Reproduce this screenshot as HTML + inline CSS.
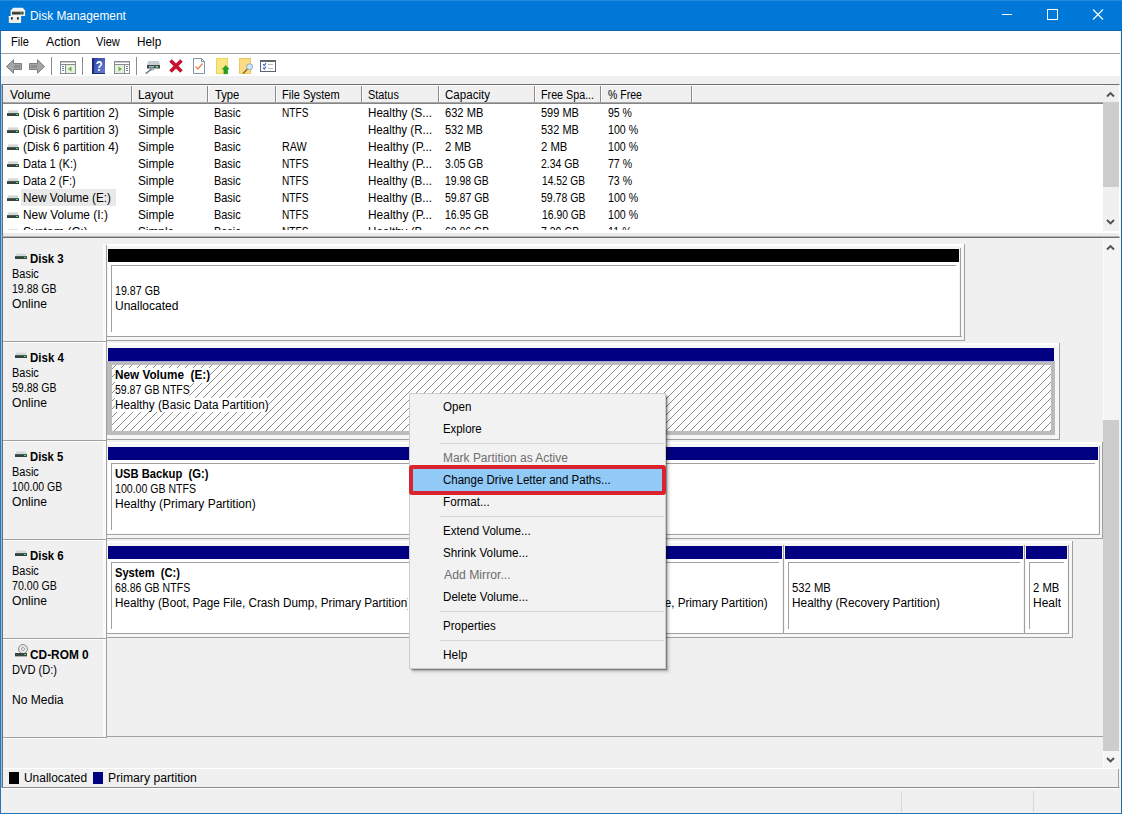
<!DOCTYPE html>
<html lang="en"><head><meta charset="utf-8"><title>Disk Management</title>
<style>
*{box-sizing:border-box;margin:0;padding:0}
html,body{width:1122px;height:814px;overflow:hidden;background:#f0f0f0}
body{font-family:"Liberation Sans", "DejaVu Sans", sans-serif;font-size:12px;color:#000;position:relative;line-height:14px}
.a{position:absolute}
.t{position:absolute;white-space:pre;line-height:14px;height:14px;transform-origin:0 0}
.b{font-weight:bold}
.g{color:#6d6d6d}
.w{background:#fff;height:15px}
svg{position:absolute;overflow:visible}
</style></head>
<body>
<div class="a" style="left:0px;top:0px;width:1122px;height:814px;background:#f0f0f0;"></div>
<div class="a" style="left:0px;top:0px;width:1122px;height:30px;background:#0078d7;"></div>
<div class="a" style="left:0px;top:30px;width:1122px;height:1px;background:#0b64b2;"></div>
<div class="a" style="left:0px;top:0px;width:1122px;height:1px;background:#2488df;"></div>
<div class="t " style="left:30.00px;top:9px;transform:scaleX(0.991);color:#fff;">Disk Management</div>
<svg style="left:1002px;top:9px" width="102" height="12" viewBox="0 0 102 12"><g stroke="#fff" stroke-width="1" fill="none" shape-rendering="crispEdges"><line x1="0" y1="5.5" x2="10" y2="5.5"/><rect x="45.5" y="0.5" width="10" height="10"/></g><g stroke="#fff" stroke-width="1.1" fill="none"><line x1="91" y1="0.5" x2="101" y2="10.5"/><line x1="101" y1="0.5" x2="91" y2="10.5"/></g></svg>
<svg style="left:8px;top:7px" width="18" height="17" viewBox="0 0 18 17"><path d="M5.2 0.8H14.8L17.1 3.6V9H2.7V3.6Z" fill="#f3f3f3"/><rect x="4" y="4.8" width="11.5" height="2.7" fill="#2c3a36"/><rect x="4" y="4.8" width="11.5" height="0.8" fill="#6a5a40"/><rect x="12.4" y="5.7" width="1.8" height="1" fill="#58d868"/><path d="M0.8 9H13.1V15.2Q13.1 16 12.3 16H1.6Q0.8 16 0.8 15.2Z" fill="#ededed"/><rect x="0.8" y="9" width="12.3" height="1" fill="#fafafa"/><rect x="3" y="10.2" width="1.7" height="2.4" fill="#1e1e1e"/><rect x="9" y="10.2" width="1.7" height="2.4" fill="#1e1e1e"/></svg>
<div class="a" style="left:1px;top:31px;width:1120px;height:22px;background:#fff;"></div>
<div class="t " style="left:11.00px;top:35px;transform:scaleX(0.923);">File</div>
<div class="t " style="left:46.00px;top:35px;transform:scaleX(1.030);">Action</div>
<div class="t " style="left:96.00px;top:35px;transform:scaleX(0.924);">View</div>
<div class="t " style="left:137.00px;top:35px;transform:scaleX(0.982);">Help</div>
<div class="a" style="left:1px;top:53px;width:1120px;height:1px;background:#a0a0a0;"></div>
<div class="a" style="left:1px;top:54px;width:1120px;height:22px;background:#fff;"></div>
<svg style="left:6px;top:59px" width="16" height="15" viewBox="0 0 16 15"><path d="M0.5 7.5L7.5 0.8V4.5H15.5V10.5H7.5V14.2Z" fill="#a6a6a6" stroke="#7d7d7d" stroke-width="1" stroke-linejoin="round"/><rect x="8" y="6" width="6" height="3" fill="#8e8e8e"/></svg>
<svg style="left:29px;top:59px" width="16" height="15" viewBox="0 0 16 15"><path d="M15.5 7.5L8.5 0.8V4.5H0.5V10.5H8.5V14.2Z" fill="#a6a6a6" stroke="#7d7d7d" stroke-width="1" stroke-linejoin="round"/><rect x="2" y="6" width="6" height="3" fill="#8e8e8e"/></svg>
<div class="a" style="left:51px;top:57px;width:1px;height:18px;background:#8c8c8c;"></div>
<div class="a" style="left:82px;top:57px;width:1px;height:18px;background:#8c8c8c;"></div>
<div class="a" style="left:136px;top:57px;width:1px;height:18px;background:#8c8c8c;"></div>
<svg style="left:60px;top:61px" width="16" height="13" viewBox="0 0 16 13"><rect x="0.5" y="0.5" width="15" height="12" fill="#fff" stroke="#8a8c94"/><rect x="1" y="1" width="14" height="1" fill="#c9cbd0"/><rect x="1" y="3" width="14" height="1" fill="#8a8c94"/><rect x="6" y="4" width="9" height="8" fill="#e3f2da"/><rect x="5" y="4" width="1" height="8" fill="#8a8c94"/><rect x="2" y="5" width="2" height="1" fill="#6a7ea8"/><rect x="2" y="7" width="2" height="1" fill="#6a7ea8"/><rect x="2" y="9" width="2" height="1" fill="#6a7ea8"/><path d="M8 8L11.5 5.5V10.5Z" fill="#6fae52"/></svg>
<svg style="left:92px;top:58px" width="13" height="16" viewBox="0 0 13 16"><defs><linearGradient id="hg" x1="0" y1="0" x2="1" y2="1"><stop offset="0" stop-color="#2b3da0"/><stop offset="1" stop-color="#6683d6"/></linearGradient></defs><rect width="13" height="16" fill="url(#hg)"/><rect width="2" height="16" fill="#1d2a78"/><rect y="15" width="13" height="1" fill="#1d2a78"/><text transform="translate(7.2 13.2) scale(.8 1)" font-family="Liberation Sans, sans-serif" font-weight="bold" font-size="14" fill="#fff" text-anchor="middle">?</text></svg>
<svg style="left:114px;top:61px" width="16" height="13" viewBox="0 0 16 13"><rect x="0.5" y="0.5" width="15" height="12" fill="#fff" stroke="#8a8c94"/><rect x="1" y="1" width="14" height="1" fill="#c9cbd0"/><rect x="1" y="3" width="14" height="1" fill="#8a8c94"/><rect x="1" y="4" width="9" height="8" fill="#e3f2da"/><rect x="10" y="4" width="1" height="8" fill="#8a8c94"/><rect x="12" y="5" width="2" height="1" fill="#6a7ea8"/><rect x="12" y="7" width="2" height="1" fill="#6a7ea8"/><rect x="12" y="9" width="2" height="1" fill="#6a7ea8"/><path d="M8 8L4.5 5.5V10.5Z" fill="#6fae52"/></svg>
<svg style="left:145px;top:61px" width="15" height="13" viewBox="0 0 15 13"><path d="M3 0H14L15 4H2Z" fill="#c8cdd2"/><rect x="2" y="4" width="13" height="3.5" fill="#3e4a4a"/><rect x="4" y="5" width="5" height="1.5" fill="#9fb0c4"/><rect x="10.5" y="5" width="2.5" height="1.5" fill="#7be07b"/><path d="M4 7.5H11L8 9.5H5Z" fill="#a9b4c0"/><path d="M6.5 8L0.8 12.6" stroke="#6e7a88" stroke-width="1.5"/></svg>
<svg style="left:169px;top:59px" width="14" height="14" viewBox="0 0 14 14"><path d="M1.5 1.5L12.5 12.5M12.5 1.5L1.5 12.5" stroke="#c8102e" stroke-width="3.6"/></svg>
<svg style="left:193px;top:58px" width="12" height="16" viewBox="0 0 12 16"><path d="M0.5 0.5H8.5L11.5 3.5V15.5H0.5Z" fill="#fff" stroke="#8393a6"/><path d="M8.5 0.5V3.5H11.5" fill="none" stroke="#8393a6"/><path d="M2.5 8.5L5 11L9.5 5.5" fill="none" stroke="#e58a5a" stroke-width="1.5"/></svg>
<svg style="left:216px;top:58px" width="13" height="16" viewBox="0 0 13 16"><rect x="0.5" y="0.5" width="11" height="15" fill="#fbe77f" stroke="#ecd060"/><path d="M9.7 7.4L13.1 11.2H11.5V15.8H7.9V11.2H6.3Z" fill="#22a022" stroke="#1c8a1c" stroke-width=".5"/></svg>
<svg style="left:239px;top:58px" width="14" height="16" viewBox="0 0 14 16"><rect x="0.5" y="0.5" width="11" height="15" fill="#fbdc85" stroke="#ecc868"/><path d="M8.5 11L4 15.5" stroke="#8a6a3a" stroke-width="1.6"/><circle cx="10.6" cy="8.8" r="3" fill="#cfe8f8" stroke="#9aa8b4" stroke-width="1"/></svg>
<svg style="left:260px;top:60px" width="16" height="12" viewBox="0 0 16 12"><rect x="0.5" y="0.5" width="15" height="11" fill="#fff" stroke="#5c6672"/><rect x="0" y="0" width="16" height="2" fill="#5c6672"/><path d="M3 4L4.2 5.5L6 3.2M3 7.5L4.2 9L6 6.7" fill="none" stroke="#3a5fc0" stroke-width="1.1"/><rect x="8" y="4" width="5" height="1" fill="#b8bcc2"/><rect x="8" y="8" width="5" height="1" fill="#b8bcc2"/></svg>
<div class="a" style="left:2px;top:84px;width:1118px;height:153px;background:#fff;border:1px solid #6e6e6e;border-bottom-color:#b4b4b4;border-right-color:#fff;"></div>
<div class="a" style="left:3px;top:233px;width:1116px;height:3px;background:#ececec;"></div>
<div class="a" style="left:3px;top:85px;width:1100px;height:19px;background:#f0f0f0;border-top:1px solid #fff;border-bottom:1px solid #858585;"></div>
<div class="a" style="left:3px;top:102px;width:1100px;height:1px;background:#a8a8a8;"></div>
<div class="a" style="left:131px;top:86px;width:1px;height:16px;background:#8a8a8a;"></div>
<div class="a" style="left:132px;top:86px;width:1px;height:16px;background:#fff;"></div>
<div class="a" style="left:207px;top:86px;width:1px;height:16px;background:#8a8a8a;"></div>
<div class="a" style="left:208px;top:86px;width:1px;height:16px;background:#fff;"></div>
<div class="a" style="left:275px;top:86px;width:1px;height:16px;background:#8a8a8a;"></div>
<div class="a" style="left:276px;top:86px;width:1px;height:16px;background:#fff;"></div>
<div class="a" style="left:361px;top:86px;width:1px;height:16px;background:#8a8a8a;"></div>
<div class="a" style="left:362px;top:86px;width:1px;height:16px;background:#fff;"></div>
<div class="a" style="left:438px;top:86px;width:1px;height:16px;background:#8a8a8a;"></div>
<div class="a" style="left:439px;top:86px;width:1px;height:16px;background:#fff;"></div>
<div class="a" style="left:534px;top:86px;width:1px;height:16px;background:#8a8a8a;"></div>
<div class="a" style="left:535px;top:86px;width:1px;height:16px;background:#fff;"></div>
<div class="a" style="left:600px;top:86px;width:1px;height:16px;background:#8a8a8a;"></div>
<div class="a" style="left:601px;top:86px;width:1px;height:16px;background:#fff;"></div>
<div class="a" style="left:691px;top:86px;width:1px;height:16px;background:#8a8a8a;"></div>
<div class="a" style="left:692px;top:86px;width:1px;height:16px;background:#fff;"></div>
<div class="t " style="left:10.00px;top:88px;transform:scaleX(1.014);">Volume</div>
<div class="t " style="left:138.00px;top:88px;transform:scaleX(0.980);">Layout</div>
<div class="t " style="left:215.00px;top:88px;transform:scaleX(0.935);">Type</div>
<div class="t " style="left:282.00px;top:88px;transform:scaleX(0.921);">File System</div>
<div class="t " style="left:368.00px;top:88px;transform:scaleX(0.906);">Status</div>
<div class="t " style="left:445.00px;top:88px;transform:scaleX(0.963);">Capacity</div>
<div class="t " style="left:541.00px;top:88px;transform:scaleX(0.894);">Free Spa...</div>
<div class="t " style="left:608.00px;top:88px;transform:scaleX(0.877);">% Free</div>
<div class="a" style="left:3px;top:103px;width:1099px;height:127px;overflow:hidden">
<svg style="left:4px;top:7px" width="12" height="6" viewBox="0 0 12 6"><rect x="1" y="0" width="10" height="3" fill="#d3d7d7"/><rect x="1" y="0" width="10" height="1" fill="#e4e6e6"/><rect x="0" y="3" width="12" height="3" fill="#33433e"/><rect x="0" y="3" width="12" height="1" fill="#4a5a55"/><rect x="9" y="4" width="2" height="1" fill="#4ee06a"/></svg>
<div class="t " style="left:20.00px;top:3px;transform:scaleX(0.982);">(Disk 6 partition 2)</div>
<div class="t " style="left:135.00px;top:3px;transform:scaleX(0.983);">Simple</div>
<div class="t " style="left:211.00px;top:3px;transform:scaleX(0.911);">Basic</div>
<div class="t " style="left:279.00px;top:3px;transform:scaleX(0.842);">NTFS</div>
<div class="t " style="left:365.00px;top:3px;transform:scaleX(0.969);">Healthy (S...</div>
<div class="t " style="left:442.00px;top:3px;transform:scaleX(0.927);">632 MB</div>
<div class="t " style="left:538.00px;top:3px;transform:scaleX(0.916);">599 MB</div>
<div class="t " style="left:605.00px;top:3px;transform:scaleX(0.875);">95 %</div>
<svg style="left:4px;top:24px" width="12" height="6" viewBox="0 0 12 6"><rect x="1" y="0" width="10" height="3" fill="#d3d7d7"/><rect x="1" y="0" width="10" height="1" fill="#e4e6e6"/><rect x="0" y="3" width="12" height="3" fill="#33433e"/><rect x="0" y="3" width="12" height="1" fill="#4a5a55"/><rect x="9" y="4" width="2" height="1" fill="#4ee06a"/></svg>
<div class="t " style="left:20.00px;top:20px;transform:scaleX(0.982);">(Disk 6 partition 3)</div>
<div class="t " style="left:135.00px;top:20px;transform:scaleX(0.983);">Simple</div>
<div class="t " style="left:211.00px;top:20px;transform:scaleX(0.911);">Basic</div>
<div class="t " style="left:365.00px;top:20px;transform:scaleX(0.961);">Healthy (R...</div>
<div class="t " style="left:442.00px;top:20px;transform:scaleX(0.916);">532 MB</div>
<div class="t " style="left:538.00px;top:20px;transform:scaleX(0.916);">532 MB</div>
<div class="t " style="left:605.00px;top:20px;transform:scaleX(0.884);">100 %</div>
<svg style="left:4px;top:41px" width="12" height="6" viewBox="0 0 12 6"><rect x="1" y="0" width="10" height="3" fill="#d3d7d7"/><rect x="1" y="0" width="10" height="1" fill="#e4e6e6"/><rect x="0" y="3" width="12" height="3" fill="#33433e"/><rect x="0" y="3" width="12" height="1" fill="#4a5a55"/><rect x="9" y="4" width="2" height="1" fill="#4ee06a"/></svg>
<div class="t " style="left:20.00px;top:37px;transform:scaleX(0.982);">(Disk 6 partition 4)</div>
<div class="t " style="left:135.00px;top:37px;transform:scaleX(0.983);">Simple</div>
<div class="t " style="left:211.00px;top:37px;transform:scaleX(0.911);">Basic</div>
<div class="t " style="left:279.00px;top:37px;transform:scaleX(0.896);">RAW</div>
<div class="t " style="left:365.00px;top:37px;transform:scaleX(0.995);">Healthy (P...</div>
<div class="t " style="left:442.00px;top:37px;transform:scaleX(0.943);">2 MB</div>
<div class="t " style="left:538.00px;top:37px;transform:scaleX(0.943);">2 MB</div>
<div class="t " style="left:605.00px;top:37px;transform:scaleX(0.884);">100 %</div>
<svg style="left:4px;top:58px" width="12" height="6" viewBox="0 0 12 6"><rect x="1" y="0" width="10" height="3" fill="#d3d7d7"/><rect x="1" y="0" width="10" height="1" fill="#e4e6e6"/><rect x="0" y="3" width="12" height="3" fill="#33433e"/><rect x="0" y="3" width="12" height="1" fill="#4a5a55"/><rect x="9" y="4" width="2" height="1" fill="#4ee06a"/></svg>
<div class="t " style="left:20.00px;top:54px;transform:scaleX(0.925);">Data 1 (K:)</div>
<div class="t " style="left:135.00px;top:54px;transform:scaleX(0.983);">Simple</div>
<div class="t " style="left:211.00px;top:54px;transform:scaleX(0.911);">Basic</div>
<div class="t " style="left:279.00px;top:54px;transform:scaleX(0.842);">NTFS</div>
<div class="t " style="left:365.00px;top:54px;transform:scaleX(0.995);">Healthy (P...</div>
<div class="t " style="left:442.00px;top:54px;transform:scaleX(0.865);">3.05 GB</div>
<div class="t " style="left:538.00px;top:54px;transform:scaleX(0.870);">2.34 GB</div>
<div class="t " style="left:605.00px;top:54px;transform:scaleX(0.880);">77 %</div>
<svg style="left:4px;top:75px" width="12" height="6" viewBox="0 0 12 6"><rect x="1" y="0" width="10" height="3" fill="#d3d7d7"/><rect x="1" y="0" width="10" height="1" fill="#e4e6e6"/><rect x="0" y="3" width="12" height="3" fill="#33433e"/><rect x="0" y="3" width="12" height="1" fill="#4a5a55"/><rect x="9" y="4" width="2" height="1" fill="#4ee06a"/></svg>
<div class="t " style="left:20.00px;top:71px;transform:scaleX(0.920);">Data 2 (F:)</div>
<div class="t " style="left:135.00px;top:71px;transform:scaleX(0.983);">Simple</div>
<div class="t " style="left:211.00px;top:71px;transform:scaleX(0.911);">Basic</div>
<div class="t " style="left:279.00px;top:71px;transform:scaleX(0.842);">NTFS</div>
<div class="t " style="left:365.00px;top:71px;transform:scaleX(0.969);">Healthy (B...</div>
<div class="t " style="left:442.00px;top:71px;transform:scaleX(0.862);">19.98 GB</div>
<div class="t " style="left:539.00px;top:71px;transform:scaleX(0.847);">14.52 GB</div>
<div class="t " style="left:605.00px;top:71px;transform:scaleX(0.880);">73 %</div>
<div class="a" style="left:18px;top:86px;width:95px;height:17px;background:#e9e9e9"></div>
<svg style="left:4px;top:92px" width="12" height="6" viewBox="0 0 12 6"><rect x="1" y="0" width="10" height="3" fill="#d3d7d7"/><rect x="1" y="0" width="10" height="1" fill="#e4e6e6"/><rect x="0" y="3" width="12" height="3" fill="#33433e"/><rect x="0" y="3" width="12" height="1" fill="#4a5a55"/><rect x="9" y="4" width="2" height="1" fill="#4ee06a"/></svg>
<div class="t " style="left:20.00px;top:88px;transform:scaleX(0.977);">New Volume (E:)</div>
<div class="t " style="left:135.00px;top:88px;transform:scaleX(0.983);">Simple</div>
<div class="t " style="left:211.00px;top:88px;transform:scaleX(0.911);">Basic</div>
<div class="t " style="left:279.00px;top:88px;transform:scaleX(0.842);">NTFS</div>
<div class="t " style="left:365.00px;top:88px;transform:scaleX(0.969);">Healthy (B...</div>
<div class="t " style="left:442.00px;top:88px;transform:scaleX(0.874);">59.87 GB</div>
<div class="t " style="left:538.00px;top:88px;transform:scaleX(0.874);">59.78 GB</div>
<div class="t " style="left:605.00px;top:88px;transform:scaleX(0.884);">100 %</div>
<svg style="left:4px;top:109px" width="12" height="6" viewBox="0 0 12 6"><rect x="1" y="0" width="10" height="3" fill="#d3d7d7"/><rect x="1" y="0" width="10" height="1" fill="#e4e6e6"/><rect x="0" y="3" width="12" height="3" fill="#33433e"/><rect x="0" y="3" width="12" height="1" fill="#4a5a55"/><rect x="9" y="4" width="2" height="1" fill="#4ee06a"/></svg>
<div class="t " style="left:20.00px;top:105px;transform:scaleX(0.994);">New Volume (I:)</div>
<div class="t " style="left:135.00px;top:105px;transform:scaleX(0.983);">Simple</div>
<div class="t " style="left:211.00px;top:105px;transform:scaleX(0.911);">Basic</div>
<div class="t " style="left:279.00px;top:105px;transform:scaleX(0.842);">NTFS</div>
<div class="t " style="left:365.00px;top:105px;transform:scaleX(0.995);">Healthy (P...</div>
<div class="t " style="left:442.00px;top:105px;transform:scaleX(0.862);">16.95 GB</div>
<div class="t " style="left:539.00px;top:105px;transform:scaleX(0.862);">16.90 GB</div>
<div class="t " style="left:605.00px;top:105px;transform:scaleX(0.884);">100 %</div>
<svg style="left:4px;top:126px" width="12" height="6" viewBox="0 0 12 6"><rect x="1" y="0" width="10" height="3" fill="#d3d7d7"/><rect x="1" y="0" width="10" height="1" fill="#e4e6e6"/><rect x="0" y="3" width="12" height="3" fill="#33433e"/><rect x="0" y="3" width="12" height="1" fill="#4a5a55"/><rect x="9" y="4" width="2" height="1" fill="#4ee06a"/></svg>
<div class="t " style="left:20.00px;top:122px;transform:scaleX(1.023);">System (C:)</div>
<div class="t " style="left:135.00px;top:122px;transform:scaleX(0.983);">Simple</div>
<div class="t " style="left:211.00px;top:122px;transform:scaleX(0.911);">Basic</div>
<div class="t " style="left:279.00px;top:122px;transform:scaleX(0.842);">NTFS</div>
<div class="t " style="left:365.00px;top:122px;transform:scaleX(0.969);">Healthy (B...</div>
<div class="t " style="left:442.00px;top:122px;transform:scaleX(0.872);">68.86 GB</div>
<div class="t " style="left:538.00px;top:122px;transform:scaleX(0.870);">7.39 GB</div>
<div class="t " style="left:605.00px;top:122px;transform:scaleX(0.902);">11 %</div>
</div>
<div class="a" style="left:1103px;top:85px;width:16px;height:146px;background:#f0f0f0;"></div>
<div class="a" style="left:1103px;top:102px;width:16px;height:85px;background:#cdcdcd;"></div>
<svg style="left:1107.0px;top:91.5px" width="7" height="6" viewBox="0 0 7 6"><path d="M0 4.5L3.5 1L7 4.5" fill="none" stroke="#505050" stroke-width="1.9"/></svg>
<svg style="left:1107.0px;top:219px" width="7" height="6" viewBox="0 0 7 6"><path d="M0 1L3.5 4.5L7 1" fill="none" stroke="#505050" stroke-width="1.9"/></svg>
<div class="a" style="left:2px;top:237px;width:1118px;height:551px;background:#f0f0f0;border:1px solid #6e6e6e;border-right-color:#f4f4f4;border-bottom-color:#8a8a8a;"></div>
<div class="a" style="left:1103px;top:238px;width:16px;height:530px;background:#f4f4f4;"></div>
<div class="a" style="left:1103px;top:238px;width:1px;height:530px;background:#fbfbfb;"></div>
<div class="a" style="left:1103px;top:420px;width:16px;height:331px;background:#cdcdcd;"></div>
<svg style="left:1107.0px;top:244.5px" width="7" height="6" viewBox="0 0 7 6"><path d="M0 4.5L3.5 1L7 4.5" fill="none" stroke="#505050" stroke-width="1.9"/></svg>
<svg style="left:1107.0px;top:757px" width="7" height="6" viewBox="0 0 7 6"><path d="M0 1L3.5 4.5L7 1" fill="none" stroke="#505050" stroke-width="1.9"/></svg>
<div class="a" style="left:107px;top:244px;width:857px;height:96px;background:#f6f6f6;"></div>
<div class="a" style="left:107px;top:244px;width:857px;height:2px;background:#fff;"></div>
<div class="a" style="left:964px;top:244px;width:1px;height:97px;background:#a0a0a0;"></div>
<svg style="left:15px;top:253px" width="12" height="6" viewBox="0 0 12 6"><rect x="1" y="0" width="10" height="3" fill="#d3d7d7"/><rect x="1" y="0" width="10" height="1" fill="#e4e6e6"/><rect x="0" y="3" width="12" height="3" fill="#33433e"/><rect x="0" y="3" width="12" height="1" fill="#4a5a55"/><rect x="9" y="4" width="2" height="1" fill="#4ee06a"/></svg>
<div class="t b" style="left:30.00px;top:252px;transform:scaleX(0.954);">Disk 3</div>
<div class="t " style="left:12.00px;top:267px;transform:scaleX(0.913);">Basic</div>
<div class="t " style="left:12.00px;top:282px;transform:scaleX(0.879);">19.88 GB</div>
<div class="t " style="left:12.00px;top:297px;transform:scaleX(1.007);">Online</div>
<div class="a" style="left:103px;top:244px;width:3px;height:97px;background:#fafafa;"></div>
<div class="a" style="left:106px;top:245px;width:1px;height:99px;background:#a0a0a0;"></div>
<div class="a" style="left:3px;top:341px;width:104px;height:1px;background:#a0a0a0;"></div>
<div class="a" style="left:3px;top:342px;width:103px;height:1px;background:#fff;"></div>
<div class="a" style="left:107px;top:340px;width:858px;height:1px;background:#a0a0a0;"></div>
<div class="a" style="left:108px;top:249px;width:851px;height:13px;background:#000;"></div>
<div class="a" style="left:108px;top:262px;width:851px;height:74px;background:#fff;"></div>
<div class="a" style="left:111px;top:265px;width:845px;height:68px;background:#fff;border-top:1px solid #a0a0a0;border-left:1px solid #a0a0a0;"></div>
<div class="a" style="left:111px;top:332px;width:1px;height:1px;background:#fff;"></div>
<div class="a" style="left:960px;top:248px;width:1px;height:89px;background:#a0a0a0;"></div>
<div class="a" style="left:115px;top:267px;width:842px;height:64px;overflow:hidden">
<div class="t " style="left:0.00px;top:17px;transform:scaleX(0.888);">19.87 GB</div>
<div class="t " style="left:0.00px;top:32px;">Unallocated</div>
</div>
<div class="a" style="left:107px;top:336px;width:855px;height:1px;background:#a0a0a0;"></div>
<div class="a" style="left:107px;top:343px;width:952px;height:96px;background:#f6f6f6;"></div>
<div class="a" style="left:107px;top:343px;width:952px;height:2px;background:#fff;"></div>
<div class="a" style="left:1059px;top:343px;width:1px;height:97px;background:#a0a0a0;"></div>
<svg style="left:15px;top:352px" width="12" height="6" viewBox="0 0 12 6"><rect x="1" y="0" width="10" height="3" fill="#d3d7d7"/><rect x="1" y="0" width="10" height="1" fill="#e4e6e6"/><rect x="0" y="3" width="12" height="3" fill="#33433e"/><rect x="0" y="3" width="12" height="1" fill="#4a5a55"/><rect x="9" y="4" width="2" height="1" fill="#4ee06a"/></svg>
<div class="t b" style="left:30.00px;top:351px;transform:scaleX(0.958);">Disk 4</div>
<div class="t " style="left:12.00px;top:366px;transform:scaleX(0.913);">Basic</div>
<div class="t " style="left:12.00px;top:381px;transform:scaleX(0.879);">59.88 GB</div>
<div class="t " style="left:12.00px;top:396px;transform:scaleX(1.007);">Online</div>
<div class="a" style="left:103px;top:343px;width:3px;height:97px;background:#fafafa;"></div>
<div class="a" style="left:106px;top:344px;width:1px;height:99px;background:#a0a0a0;"></div>
<div class="a" style="left:3px;top:440px;width:104px;height:1px;background:#a0a0a0;"></div>
<div class="a" style="left:3px;top:441px;width:103px;height:1px;background:#fff;"></div>
<div class="a" style="left:107px;top:439px;width:953px;height:1px;background:#a0a0a0;"></div>
<div class="a" style="left:108px;top:348px;width:946px;height:13px;background:#000080;"></div>
<div class="a" style="left:107px;top:361px;width:948px;height:74px;background:#bcbcbc;"></div>
<div class="a" style="left:108px;top:361px;width:946px;height:1px;background:#a8a8dc;"></div>
<svg style="left:112px;top:365px" width="939" height="66"><defs><pattern id="h" width="8" height="8" patternUnits="userSpaceOnUse"><rect width="8" height="8" fill="#fff"/><path d="M-1 5L5 -1M3 9L9 3" stroke="#787878" stroke-width=".85"/></pattern></defs><rect width="100%" height="100%" fill="url(#h)"/></svg>
<div class="a" style="left:115px;top:366px;width:937px;height:64px;overflow:hidden">
<div class="t b w" style="left:0.00px;top:2px;transform:scaleX(0.979);">New Volume  (E:)</div>
<div class="t w" style="left:0.00px;top:17px;transform:scaleX(0.876);">59.87 GB NTFS</div>
<div class="t w" style="left:0.00px;top:32px;transform:scaleX(0.976);height:14px;">Healthy (Basic Data Partition)</div>
</div>
<div class="a" style="left:107px;top:442px;width:995px;height:96px;background:#f6f6f6;"></div>
<div class="a" style="left:107px;top:442px;width:995px;height:2px;background:#fff;"></div>
<div class="a" style="left:1102px;top:442px;width:1px;height:97px;background:#a0a0a0;"></div>
<svg style="left:15px;top:451px" width="12" height="6" viewBox="0 0 12 6"><rect x="1" y="0" width="10" height="3" fill="#d3d7d7"/><rect x="1" y="0" width="10" height="1" fill="#e4e6e6"/><rect x="0" y="3" width="12" height="3" fill="#33433e"/><rect x="0" y="3" width="12" height="1" fill="#4a5a55"/><rect x="9" y="4" width="2" height="1" fill="#4ee06a"/></svg>
<div class="t b" style="left:30.00px;top:450px;transform:scaleX(0.940);">Disk 5</div>
<div class="t " style="left:12.00px;top:465px;transform:scaleX(0.913);">Basic</div>
<div class="t " style="left:12.00px;top:480px;transform:scaleX(0.875);">100.00 GB</div>
<div class="t " style="left:12.00px;top:495px;transform:scaleX(1.007);">Online</div>
<div class="a" style="left:103px;top:442px;width:3px;height:97px;background:#fafafa;"></div>
<div class="a" style="left:106px;top:443px;width:1px;height:99px;background:#a0a0a0;"></div>
<div class="a" style="left:3px;top:539px;width:104px;height:1px;background:#a0a0a0;"></div>
<div class="a" style="left:3px;top:540px;width:103px;height:1px;background:#fff;"></div>
<div class="a" style="left:107px;top:538px;width:996px;height:1px;background:#a0a0a0;"></div>
<div class="a" style="left:108px;top:447px;width:990px;height:13px;background:#000080;"></div>
<div class="a" style="left:108px;top:460px;width:990px;height:74px;background:#fff;"></div>
<div class="a" style="left:111px;top:463px;width:984px;height:68px;background:#fff;border-top:1px solid #a0a0a0;border-left:1px solid #a0a0a0;"></div>
<div class="a" style="left:111px;top:530px;width:1px;height:1px;background:#fff;"></div>
<div class="a" style="left:1099px;top:446px;width:1px;height:89px;background:#a0a0a0;"></div>
<div class="a" style="left:115px;top:465px;width:981px;height:64px;overflow:hidden">
<div class="t b " style="left:0.00px;top:2px;transform:scaleX(0.934);">USB Backup  (G:)</div>
<div class="t " style="left:0.00px;top:17px;transform:scaleX(0.881);">100.00 GB NTFS</div>
<div class="t " style="left:0.00px;top:32px;">Healthy (Primary Partition)</div>
</div>
<div class="a" style="left:107px;top:534px;width:993px;height:1px;background:#a0a0a0;"></div>
<div class="a" style="left:107px;top:541px;width:965px;height:96px;background:#f6f6f6;"></div>
<div class="a" style="left:107px;top:541px;width:965px;height:2px;background:#fff;"></div>
<div class="a" style="left:1072px;top:541px;width:1px;height:97px;background:#a0a0a0;"></div>
<svg style="left:15px;top:550px" width="12" height="6" viewBox="0 0 12 6"><rect x="1" y="0" width="10" height="3" fill="#d3d7d7"/><rect x="1" y="0" width="10" height="1" fill="#e4e6e6"/><rect x="0" y="3" width="12" height="3" fill="#33433e"/><rect x="0" y="3" width="12" height="1" fill="#4a5a55"/><rect x="9" y="4" width="2" height="1" fill="#4ee06a"/></svg>
<div class="t b" style="left:30.00px;top:549px;transform:scaleX(0.953);">Disk 6</div>
<div class="t " style="left:12.00px;top:564px;transform:scaleX(0.913);">Basic</div>
<div class="t " style="left:12.00px;top:579px;transform:scaleX(0.887);">70.00 GB</div>
<div class="t " style="left:12.00px;top:594px;transform:scaleX(1.007);">Online</div>
<div class="a" style="left:103px;top:541px;width:3px;height:97px;background:#fafafa;"></div>
<div class="a" style="left:106px;top:542px;width:1px;height:99px;background:#a0a0a0;"></div>
<div class="a" style="left:3px;top:638px;width:104px;height:1px;background:#a0a0a0;"></div>
<div class="a" style="left:3px;top:639px;width:103px;height:1px;background:#fff;"></div>
<div class="a" style="left:107px;top:637px;width:966px;height:1px;background:#a0a0a0;"></div>
<div class="a" style="left:108px;top:546px;width:674px;height:13px;background:#000080;"></div>
<div class="a" style="left:108px;top:559px;width:674px;height:74px;background:#fff;"></div>
<div class="a" style="left:111px;top:562px;width:668px;height:68px;background:#fff;border-top:1px solid #a0a0a0;border-left:1px solid #a0a0a0;"></div>
<div class="a" style="left:111px;top:629px;width:1px;height:1px;background:#fff;"></div>
<div class="a" style="left:783px;top:545px;width:1px;height:89px;background:#a0a0a0;"></div>
<div class="a" style="left:115px;top:564px;width:292.5px;height:64px;overflow:hidden">
<div class="t b " style="left:0.00px;top:2px;transform:scaleX(0.928);">System  (C:)</div>
<div class="t " style="left:0.00px;top:17px;transform:scaleX(0.881);">68.86 GB NTFS</div>
<div class="t " style="left:0.00px;top:32px;transform:scaleX(0.976);">Healthy (Boot, Page File, Crash Dump, Primary Partition)</div>
</div>
<div class="t " style="left:622.00px;top:596px;transform:scaleX(0.970);">Page File, Primary Partition)</div>
<div class="a" style="left:785px;top:546px;width:238px;height:13px;background:#000080;"></div>
<div class="a" style="left:785px;top:559px;width:238px;height:74px;background:#fff;"></div>
<div class="a" style="left:788px;top:562px;width:232px;height:68px;background:#fff;border-top:1px solid #a0a0a0;border-left:1px solid #a0a0a0;"></div>
<div class="a" style="left:788px;top:629px;width:1px;height:1px;background:#fff;"></div>
<div class="a" style="left:1024px;top:545px;width:1px;height:89px;background:#a0a0a0;"></div>
<div class="a" style="left:792px;top:564px;width:229px;height:64px;overflow:hidden">
<div class="t " style="left:0.00px;top:17px;transform:scaleX(0.938);">532 MB</div>
<div class="t " style="left:0.00px;top:32px;transform:scaleX(0.986);">Healthy (Recovery Partition)</div>
</div>
<div class="a" style="left:1026px;top:546px;width:41px;height:13px;background:#000080;"></div>
<div class="a" style="left:1026px;top:559px;width:41px;height:74px;background:#fff;"></div>
<div class="a" style="left:1029px;top:562px;width:35px;height:68px;background:#fff;border-top:1px solid #a0a0a0;border-left:1px solid #a0a0a0;"></div>
<div class="a" style="left:1029px;top:629px;width:1px;height:1px;background:#fff;"></div>
<div class="a" style="left:1068px;top:545px;width:1px;height:89px;background:#a0a0a0;"></div>
<div class="a" style="left:1033px;top:564px;width:28px;height:64px;overflow:hidden">
<div class="t " style="left:0.00px;top:17px;transform:scaleX(0.942);">2 MB</div>
<div class="t " style="left:0.00px;top:32px;">Healthy (Primary Partition)</div>
</div>
<div class="a" style="left:107px;top:633px;width:962px;height:1px;background:#a0a0a0;"></div>
<svg style="left:14px;top:644px" width="15" height="14" viewBox="0 0 15 14"><circle cx="9" cy="5" r="4.5" fill="#e6e6e6" stroke="#8a8a8a" stroke-width="1"/><circle cx="9" cy="5" r="1.5" fill="#fff" stroke="#8a8a8a" stroke-width=".8"/><rect x="1" y="9" width="12" height="3" fill="#3c4440"/><rect x="10" y="10" width="2" height="1" fill="#3fe05a"/><rect x="1" y="12" width="12" height="1" fill="#b0b0b0"/></svg>
<div class="t b" style="left:30.00px;top:648px;transform:scaleX(0.989);">CD-ROM 0</div>
<div class="t " style="left:12.00px;top:663px;transform:scaleX(0.926);">DVD (D:)</div>
<div class="t " style="left:12.00px;top:693px;transform:scaleX(1.004);">No Media</div>
<div class="a" style="left:103px;top:640px;width:3px;height:97px;background:#fafafa;"></div>
<div class="a" style="left:106px;top:641px;width:1px;height:96px;background:#a0a0a0;"></div>
<div class="a" style="left:3px;top:737px;width:104px;height:1px;background:#a0a0a0;"></div>
<div class="a" style="left:3px;top:738px;width:103px;height:1px;background:#fff;"></div>
<div class="a" style="left:107px;top:736px;width:996px;height:1px;background:#a0a0a0;"></div>
<div class="a" style="left:3px;top:768px;width:1116px;height:1px;background:#fff;"></div>
<div class="a" style="left:9px;top:772px;width:10px;height:12px;background:#000;"></div>
<div class="t " style="left:24.00px;top:771px;transform:scaleX(0.995);">Unallocated</div>
<div class="a" style="left:93px;top:772px;width:10px;height:12px;background:#000080;"></div>
<div class="t " style="left:108.00px;top:771px;transform:scaleX(1.017);">Primary partition</div>
<div class="a" style="left:1118px;top:769px;width:1px;height:19px;background:#a0a0a0;"></div>
<div class="a" style="left:1px;top:788px;width:1120px;height:1px;background:#fff;"></div>
<div class="a" style="left:901px;top:791px;width:1px;height:21px;background:#d7d7d7;"></div>
<div class="a" style="left:1033px;top:791px;width:1px;height:21px;background:#d7d7d7;"></div>
<div class="a" style="left:409px;top:393px;width:257px;height:276px;background:#f2f2f2;border:1px solid #ccc;box-shadow:1.5px 1.5px 1.5px rgba(0,0,0,.36),3px 3px 3px rgba(0,0,0,.18)"></div>
<div class="a" style="left:440px;top:443px;width:224px;height:1px;background:#d7d7d7;"></div>
<div class="a" style="left:440px;top:516px;width:224px;height:1px;background:#d7d7d7;"></div>
<div class="a" style="left:440px;top:611px;width:224px;height:1px;background:#d7d7d7;"></div>
<div class="a" style="left:440px;top:640px;width:224px;height:1px;background:#d7d7d7;"></div>
<div class="a" style="left:409px;top:465px;width:257px;height:30px;background:#91c9f7;border:4px solid #d9232e;border-radius:3px"></div>
<div class="t " style="left:443.00px;top:400px;transform:scaleX(0.965);">Open</div>
<div class="t " style="left:443.00px;top:422px;transform:scaleX(0.949);">Explore</div>
<div class="t g" style="left:443.00px;top:451px;transform:scaleX(0.996);">Mark Partition as Active</div>
<div class="t " style="left:443.00px;top:473px;transform:scaleX(0.959);">Change Drive Letter and Paths...</div>
<div class="t " style="left:443.00px;top:495px;transform:scaleX(0.973);">Format...</div>
<div class="t " style="left:443.00px;top:524px;transform:scaleX(0.966);">Extend Volume...</div>
<div class="t " style="left:443.00px;top:546px;transform:scaleX(0.976);">Shrink Volume...</div>
<div class="t g" style="left:444.00px;top:568px;transform:scaleX(1.019);">Add Mirror...</div>
<div class="t " style="left:443.00px;top:590px;transform:scaleX(0.968);">Delete Volume...</div>
<div class="t " style="left:443.00px;top:619px;transform:scaleX(0.966);">Properties</div>
<div class="t " style="left:443.00px;top:648px;transform:scaleX(0.990);">Help</div>
<div class="a" style="left:0px;top:31px;width:1px;height:783px;background:#2a74b8;"></div>
<div class="a" style="left:1px;top:84px;width:1px;height:704px;background:#8fbde6;"></div>
<div class="a" style="left:1121px;top:31px;width:1px;height:783px;background:#2e6a94;"></div>
<div class="a" style="left:1120px;top:31px;width:1px;height:782px;background:#e4f4ff;"></div>
<div class="a" style="left:0px;top:813px;width:1122px;height:1px;background:#2a74b8;"></div>
</body></html>
